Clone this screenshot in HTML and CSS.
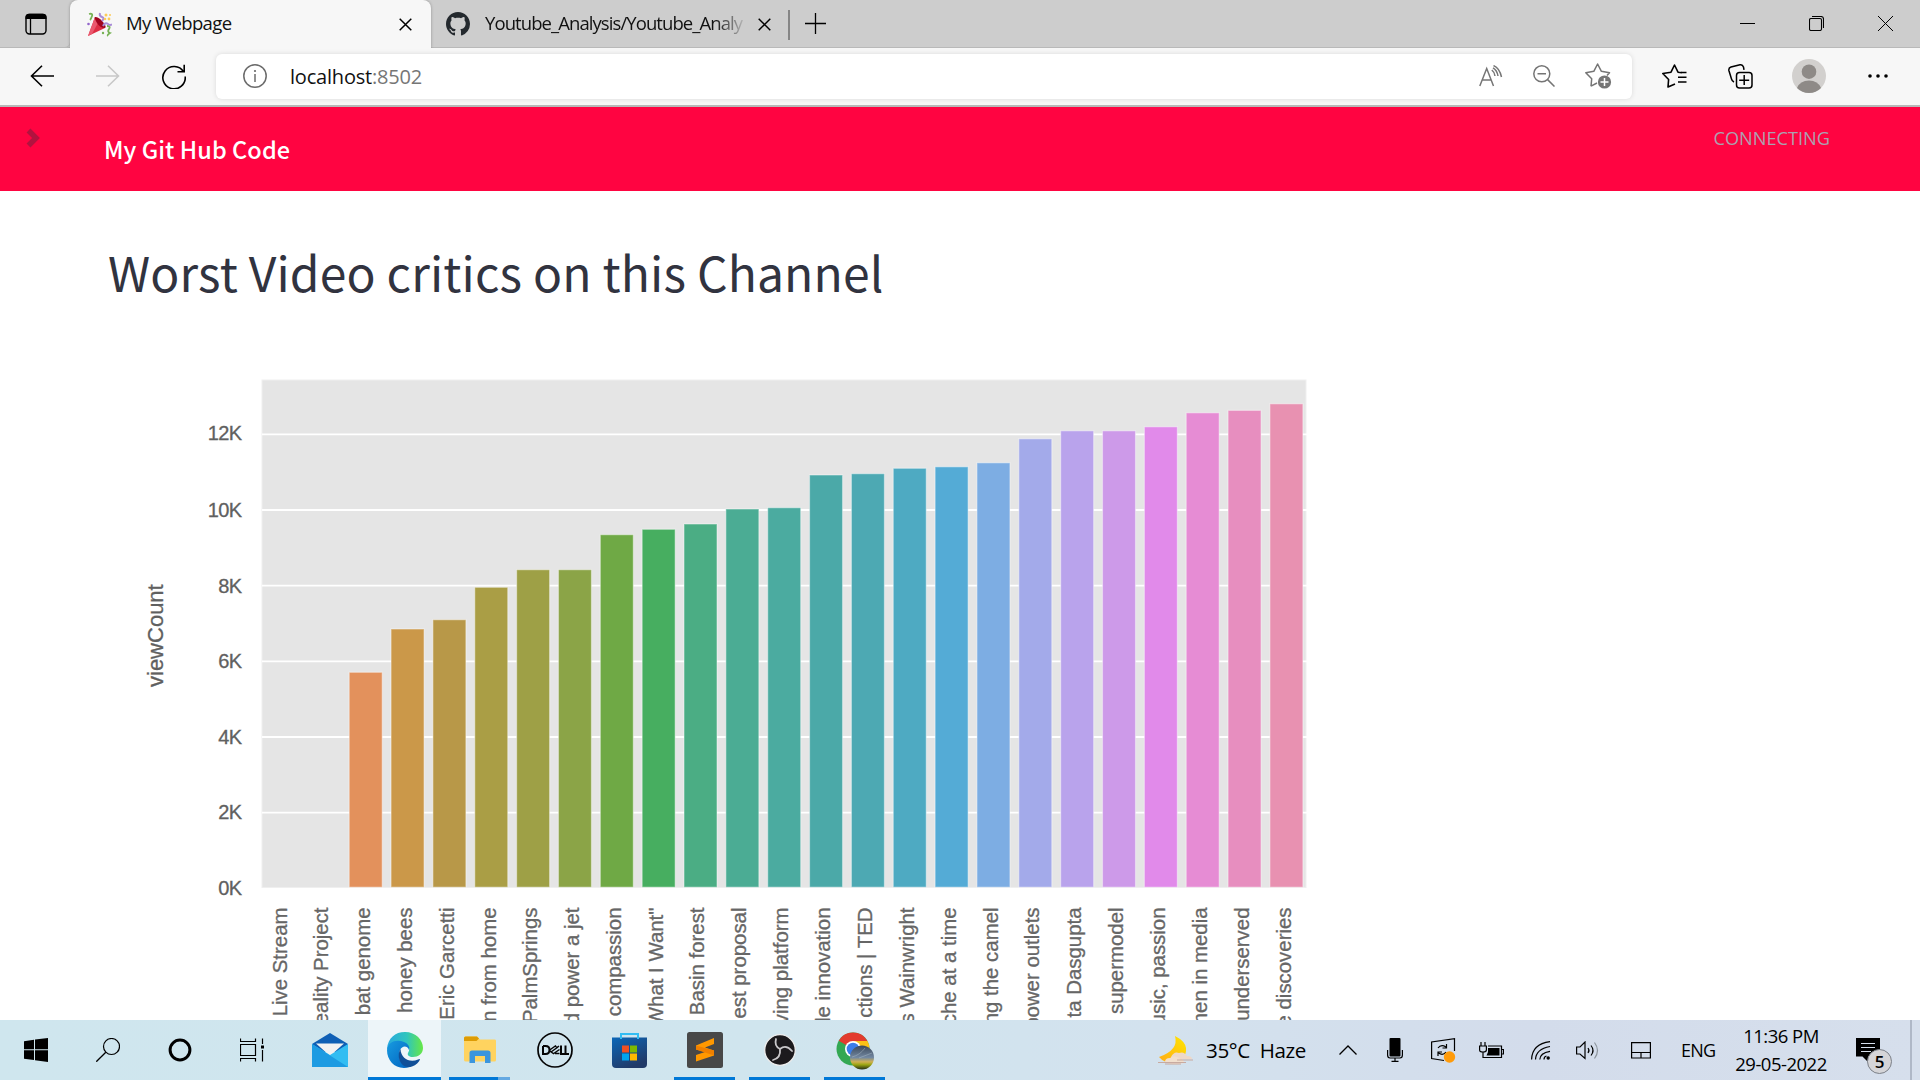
FILE: index.html
```html
<!DOCTYPE html>
<html lang="en">
<head>
<meta charset="utf-8">
<title>My Webpage</title>
<link rel="stylesheet" href="styles.css">
</head>
<body>
<div class="screen">
  <div class="tabstrip">
    <div class="tab-actions">
      <svg width="22" height="22" viewBox="0 0 22 22"><rect x="1" y="1.5" width="20" height="19.5" rx="3.5" fill="none" stroke="#000" stroke-width="1.4"/><path d="M.5 6V4Q.5.7 4 .7H18Q21.5.7 21.500 4V6Z"/><path d="M5.500 6V21" stroke="#000" stroke-width="1.300"/></svg>
    </div>
    <div class="tab tab-active">
      <svg class="favicon" width="25" height="25" viewBox="0 0 25 25"><path d="M8 5 18 16 1 24Z" fill="#dd2e44"/><path d="M8 5 12 9 5 22 1 24Z" fill="#ea596e"/><path d="M8 5Q12 5 16 10T18 16Q13 16 10 11T8 5" fill="#a0041e"/><path d="M2 2Q6 1 5 4T3 8M20 14Q24 14 22 17T23 21Q20 23 21 24" fill="none" stroke="#77b255" stroke-width="1.800"/><path d="M13 1Q12 4 15 5T15 9M16 14Q18 10 21 12T25 12" fill="none" stroke="#aa8dd8" stroke-width="2"/><g fill="#fdcb58"><circle cx="19" cy="3" r="1.500"/><circle cx="22" cy="7" r="1.400"/><circle cx="18" cy="7" r="1.300"/><circle cx="23" cy="3" r="1"/></g><circle cx="1.500" cy="12" r="1.300" fill="#9266cc"/><circle cx="16" cy="21" r="1.200" fill="#77b255"/></svg>
      <span class="tab-title title-one">My Webpage</span>
      <svg class="tab-close" width="13" height="13" viewBox="0 0 13 13"><path d="M.7.7 12.300 12.300M12.300.7.7 12.300" stroke="#000" stroke-width="1.500"/></svg>
    </div>
    <div class="tab tab-idle">
      <svg class="favicon" width="24" height="24" viewBox="0 0 16 16"><path fill="#24292e" fill-rule="evenodd" d="M8 0C3.580 0 0 3.580 0 8c0 3.540 2.290 6.530 5.470 7.590.4.070.55-.17.55-.38 0-.19-.01-.82-.01-1.490-2.010.37-2.530-.49-2.690-.94-.09-.23-.48-.94-.82-1.130-.28-.15-.68-.52-.01-.53.63-.01 1.080.58 1.230.82.72 1.210 1.870.87 2.330.66.070-.52.28-.87.51-1.070-1.780-.2-3.640-.89-3.640-3.950 0-.87.31-1.590.82-2.150-.08-.2-.36-1.020.080-2.120 0 0 .67-.21 2.200.82.64-.18 1.320-.27 2-.27.68 0 1.360.090 2 .27 1.530-1.040 2.200-.82 2.200-.82.44 1.100.16 1.920.080 2.120.51.56.82 1.270.82 2.150 0 3.070-1.870 3.750-3.650 3.950.29.25.54.73.54 1.480 0 1.070-.01 1.930-.01 2.200 0 .21.15.46.55.38A8.010 8.010 0 0 0 16 8c0-4.420-3.580-8-8-8z"/></svg>
      <span class="tab-title title-two">Youtube_Analysis/Youtube_Analy</span>
      <svg class="tab-close" width="13" height="13" viewBox="0 0 13 13"><path d="M.7.7 12.300 12.300M12.300.7.7 12.300" stroke="#000" stroke-width="1.500"/></svg>
    </div>
    <div class="tab-rule"></div>
    <svg class="new-tab" width="21" height="21" viewBox="0 0 21 21"><path d="M0 10.500H21M10.500 0V21" stroke="#000" stroke-width="1.300"/></svg>
    <div class="window-controls">
      <svg width="15" height="15" viewBox="0 0 15 15"><path d="M0 7.500H15" stroke="#000"/></svg>
      <svg width="15" height="15" viewBox="0 0 15 15"><path d="M2 2.500H11Q12.500 2.500 12.500 4V13Q12.500 14.500 11 14.500H2Q.5 14.500.5 13V4Q.5 2.500 2 2.500ZM3 .5H12Q14.500.5 14.500 3V12" fill="none" stroke="#000" stroke-width="1.100"/></svg>
      <svg width="15" height="15" viewBox="0 0 15 15"><path d="M0 0 15 15M15 0 0 15" stroke="#000"/></svg>
    </div>
  </div>

  <div class="toolbar">
    <svg width="24" height="22" viewBox="0 0 24 22"><path d="M12 .8 1.500 11 12 21.200M1.500 11H24" fill="none" stroke="#000" stroke-width="1.600"/></svg>
    <svg width="24" height="22" viewBox="0 0 24 22"><path d="M12 .8 22.500 11 12 21.200M22.500 11H0" fill="none" stroke="#c8c8c8" stroke-width="1.600"/></svg>
    <svg width="24" height="25" viewBox="0 0 24 25"><path d="M21.600 7.800A11.200 11.200 0 1 0 23.200 12.500M22.200.8V7.800H15.500" fill="none" stroke="#000" stroke-width="1.600"/></svg>
    <div class="address">
      <svg width="24" height="24" viewBox="0 0 24 24"><circle cx="12" cy="12" r="11.200" fill="none" stroke="#6b6b6b" stroke-width="1.500"/><path d="M12 10V18" stroke="#6b6b6b" stroke-width="1.500"/><circle cx="12" cy="7" r="1.100" fill="#6b6b6b"/></svg>
      <span class="url">localhost<span class="port">:8502</span></span>
      <svg width="24" height="22" viewBox="0 0 24 22"><g fill="none" stroke="#757575" stroke-width="1.500"><path d="M.8 21 7.700 3.500 14.500 21M3.200 15H12.200M12.800 5Q15.500 7 16 11M14 2.800Q18 5 19 11M14.500 .6Q20.500 3 22.500 12"/></g></svg>
      <svg width="22" height="22" viewBox="0 0 22 22"><g fill="none" stroke="#757575" stroke-width="1.500"><circle cx="8.800" cy="8.800" r="8"/><path d="M14.600 14.600 21.500 21.500M4.500 8.800H13"/></g></svg>
      <svg width="27" height="26" viewBox="0 0 27 26"><path d="M6 23.200 6.700 15.700.8 9.700 8.800 8.300 12.600 1 16.400 8.300 24.500 9.700 22 12.500M6 23.200 12 20" fill="none" stroke="#757575" stroke-width="1.500" stroke-linejoin="round"/><circle cx="19.500" cy="19" r="6.600" fill="#757575"/><path d="M15.500 19H23.500M19.500 15V23" stroke="#fff" stroke-width="1.500"/></svg>
    </div>
    <svg width="25" height="24" viewBox="0 0 25 24"><path d="M13 20 6 23 6.600 15.500.8 9.500 9 8.200 12.500 1 16 8.200 20 8.800M16 13.200H24.500M16 18H24.500M19 8.500H24.500" fill="none" stroke="#000" stroke-width="1.600" stroke-linejoin="round"/></svg>
    <svg width="25" height="25" viewBox="0 0 25 25"><g fill="none" stroke="#000" stroke-width="1.500"><rect x="8.500" y="8.500" width="15.500" height="15.500" rx="3"/><path d="M16.200 11V21M11.200 16.200H21.200M6 18Q4 17 3.500 15L.9 6.500Q.4 4 3 3L12 .8Q14.500.4 15.500 3L16 5.800"/></g></svg>
    <svg width="34" height="34" viewBox="0 0 34 34"><circle cx="17" cy="17" r="17" fill="#d2d0ce"/><circle cx="17" cy="12.700" r="7.300" fill="#8e8a87"/><path d="M5 29Q8 21.500 17 21.500T29 29Q24 34 17 34T5 29" fill="#8e8a87"/></svg>
    <svg width="20" height="4" viewBox="0 0 20 4"><circle cx="2" cy="2" r="1.800"/><circle cx="10" cy="2" r="1.800"/><circle cx="18" cy="2" r="1.800"/></svg>
  </div>

  <header class="navbar">
    <svg class="chevron" width="14" height="20" viewBox="0 0 14 20"><path d="M2.500 2.500 10 10 2.500 17.500" fill="none" stroke="#b1133f" stroke-width="5.500"/></svg>
    <span class="brand">My Git Hub Code</span>
    <span class="status">CONNECTING</span>
  </header>

  <main class="content">
    <h1 class="heading">Worst Video critics on this Channel</h1>
    <svg class="chart" width="1220" height="670" viewBox="130 350 1220 670">
      <rect class="plot" x="262" y="380" width="1044" height="507.500"/>
      <path class="grid" d="M262 434.300H1307M262 510H1307M262 585.700H1307M262 661.400H1307M262 737H1307M262 812.600H1307"/>
      <g class="ticks">
        <text x="241.500" y="440">12K</text><text x="241.500" y="517">10K</text><text x="241.500" y="592.500">8K</text><text x="241.500" y="668">6K</text><text x="241.500" y="743.500">4K</text><text x="241.500" y="819">2K</text><text x="241.500" y="895">0K</text>
      </g>
      <text class="axis-title" transform="translate(163 687) rotate(-90)">viewCount</text>
      <g class="bars">
        <rect x="349.200" y="672.300" width="33" height="214.900" fill="#e3915c"/>
        <rect x="391.050" y="629" width="33" height="258.200" fill="#cb9849"/>
        <rect x="432.900" y="619.700" width="33" height="267.500" fill="#b89848"/>
        <rect x="474.750" y="587.300" width="33" height="299.900" fill="#aa9e45"/>
        <rect x="516.600" y="569.700" width="33" height="317.500" fill="#9ea046"/>
        <rect x="558.450" y="569.700" width="33" height="317.500" fill="#8ba447"/>
        <rect x="600.300" y="534.700" width="33" height="352.500" fill="#6fa945"/>
        <rect x="642.150" y="529.300" width="33" height="357.900" fill="#47ae60"/>
        <rect x="684" y="524" width="33" height="363.200" fill="#4bad84"/>
        <rect x="725.850" y="509" width="33" height="378.200" fill="#4bac94"/>
        <rect x="767.700" y="507.700" width="33" height="379.500" fill="#4baba0"/>
        <rect x="809.550" y="475" width="33" height="412.200" fill="#4ba9a8"/>
        <rect x="851.400" y="473.700" width="33" height="413.500" fill="#4da9b3"/>
        <rect x="893.250" y="468.300" width="33" height="418.900" fill="#4eaac2"/>
        <rect x="935.100" y="466.800" width="33" height="420.400" fill="#54abd6"/>
        <rect x="976.950" y="462.800" width="33" height="424.400" fill="#7dade3"/>
        <rect x="1018.800" y="438.800" width="33" height="448.400" fill="#a3aaea"/>
        <rect x="1060.650" y="430.800" width="33" height="456.400" fill="#b9a3ec"/>
        <rect x="1102.500" y="430.800" width="33" height="456.400" fill="#cd9ae9"/>
        <rect x="1144.350" y="426.800" width="33" height="460.400" fill="#e18aea"/>
        <rect x="1186.200" y="412.800" width="33" height="474.400" fill="#e68cd4"/>
        <rect x="1228.050" y="410.400" width="33" height="476.800" fill="#e78ebf"/>
        <rect x="1269.900" y="403.800" width="33" height="483.400" fill="#e891b1"/>
      </g>
      <g class="labels">
        <text transform="translate(286.500 907.500) rotate(-90)">Live Stream</text>
        <text transform="translate(328 907.500) rotate(-90)">eality Project</text>
        <text transform="translate(370 907.500) rotate(-90)">bat genome</text>
        <text transform="translate(411.900 907.500) rotate(-90)">honey bees</text>
        <text transform="translate(453.700 907.500) rotate(-90)">Eric Garcetti</text>
        <text transform="translate(495.600 907.500) rotate(-90)">n from home</text>
        <text transform="translate(537.400 907.500) rotate(-90)">PalmSprings</text>
        <text transform="translate(579.300 907.500) rotate(-90)">d power a jet</text>
        <text transform="translate(621.100 907.500) rotate(-90)">compassion</text>
        <text transform="translate(662.500 907.500) rotate(-90)">What I Want"</text>
        <text transform="translate(704.300 907.500) rotate(-90)">Basin forest</text>
        <text transform="translate(746 907.500) rotate(-90)">est proposal</text>
        <text transform="translate(788.200 907.500) rotate(-90)">ving platform</text>
        <text transform="translate(830.200 907.500) rotate(-90)">le innovation</text>
        <text transform="translate(872 907.500) rotate(-90)">ctions | TED</text>
        <text transform="translate(913.900 907.500) rotate(-90)">s Wainwright</text>
        <text transform="translate(955.700 907.500) rotate(-90)">che at a time</text>
        <text transform="translate(997.500 907.500) rotate(-90)">ng the camel</text>
        <text transform="translate(1039.300 907.500) rotate(-90)">power outlets</text>
        <text transform="translate(1081.200 907.500) rotate(-90)">ta Dasgupta</text>
        <text transform="translate(1123 907.500) rotate(-90)">supermodel</text>
        <text transform="translate(1165 907.500) rotate(-90)">usic, passion</text>
        <text transform="translate(1206.800 907.500) rotate(-90)">men in media</text>
        <text transform="translate(1248.600 907.500) rotate(-90)">underserved</text>
        <text transform="translate(1290.500 907.500) rotate(-90)">e discoveries</text>
      </g>
    </svg>
  </main>

  <footer class="taskbar">
    <div class="system">
      <svg width="24" height="24" viewBox="0 0 24 24"><path d="M0 3.200 10 1.800V11.300H0ZM11 1.600 24 0V11.300H11ZM0 12.300H10V22L0 20.700ZM11 12.300H24V24L11 22.200Z"/></svg>
      <svg width="24" height="24" viewBox="0 0 24 24"><circle cx="15.500" cy="8.500" r="8" fill="none" stroke="#000" stroke-width="1.200"/><path d="M9.800 14.200.3 23.700" stroke="#000" stroke-width="1.300"/></svg>
      <svg width="24" height="24" viewBox="0 0 24 24"><circle cx="12" cy="12" r="9.900" fill="none" stroke="#000" stroke-width="3"/></svg>
      <svg width="24" height="24" viewBox="0 0 24 24"><g fill="none" stroke="#000" stroke-width="1.200"><path d="M.5.500V3.500H15.500V.5M.5 23.500V20.500H15.500V23.500M.5 6.500H15.500V17.500H.5ZM22.500.5V6M22.500 12V23.500"/></g><path d="M21 7.500H24V10.500H21Z"/></svg>
    </div>
    <div class="apps">
      <div class="app"><svg width="36" height="36" viewBox="0 0 36 36"><path d="M0 12 18 1 36 12 31 20H5Z" fill="#0f5fb5"/><path d="M4 11.500H32L18 24Z" fill="#f2f2f2"/><path d="M0 12 18 23 36 12V35H0Z" fill="#33bdf2"/><path d="M0 12 36 35H0Z" fill="#1d9be2"/></svg></div>
      <div class="app app-current"><svg width="36" height="36" viewBox="0 0 36 36"><defs><linearGradient id="eg" x1="0" x2="1"><stop stop-color="#28a8e0"/><stop offset=".55" stop-color="#2fc5bd"/><stop offset="1" stop-color="#67e845"/></linearGradient><linearGradient id="eb" x1="0" y1="0" x2="1" y2="1"><stop stop-color="#189be0"/><stop offset="1" stop-color="#0062c0"/></linearGradient></defs><path d="M0 17C1 6 8 0 18 0 29 0 36 8 36 16 36 22 31 25 26 25 22 25 20 23 21 21 23 18 23 14 18 12Z" fill="url(#eg)"/><path d="M0 18C1 9 10 7 17 10 22 12 23 16 22 18 20 13 15 14 13 18 9 27 17 35 23 35 10 39 0 30 0 18Z" fill="url(#eb)"/><path d="M13.500 17C8 26 16 38 25 34.500 29 33 32 30 33 27.500 33 26.500 32 27 31 27.500 23 31 14 27 13.500 17Z" fill="#114f98"/></svg></div>
      <div class="app app-open app-stack"><svg width="32" height="28" viewBox="0 0 32 28"><path d="M0 2Q0 .5 1.500.5H13L16 3.500H31Q32 3.500 32 5V24Q32 25.500 30.500 25.500H2Q0 25.500 0 24Z" fill="#ffd35f"/><path d="M0 2Q0 .5 1.500.5H13L15 2.500 12.500 5H0Z" fill="#dd9c05"/><path d="M5.500 27V17Q5.500 14.500 8 14.500H24Q26.500 14.500 26.500 17V27H21V20H11V27Z" fill="#3b95dd"/></svg></div>
      <div class="app"><svg width="36" height="36" viewBox="0 0 36 36"><circle cx="18" cy="18" r="17" fill="none" stroke="#050505" stroke-width="1.700"/><g fill="none" stroke="#050505" stroke-width="2"><path d="M6 14V22H8.500Q12.500 22 12.500 18T8.500 14H6M24 13.500V22H27.500M28.500 13.500V22H32"/><path d="M12 18.500 19 13.500M14 20 21 15M16 22 22.500 17.500M12 18.500 17 22M18 14 20 15.500 22 14M18 21.500H22.500" stroke-width="1.500"/></g></svg></div>
      <div class="app"><svg width="35" height="36" viewBox="0 0 35 36"><defs><linearGradient id="st" x1="0" y1="0" x2=".5" y2="1"><stop stop-color="#0b67b8"/><stop offset="1" stop-color="#213a68"/></linearGradient></defs><path d="M0 5.500H35V32Q35 36 31 36H4Q0 36 0 32Z" fill="url(#st)"/><path d="M9 7V2H26V7" fill="none" stroke="#32bdf3" stroke-width="2"/><path d="M10 13.500H17V20.500H10Z" fill="#f25022"/><path d="M18 13.500H25V20.500H18Z" fill="#7fba00"/><path d="M10 21.500H17V28.500H10Z" fill="#00a4ef"/><path d="M18 21.500H25V28.500H18Z" fill="#ffb900"/></svg></div>
      <div class="app app-open"><svg width="36" height="36" viewBox="0 0 36 36"><rect width="36" height="36" rx="2.500" fill="#484848"/><path d="M9 13.500 27 6V12L18 15.500 27 18.500V23.500L9 29.500V23L18 20 9 17.500Z" fill="#ff9800"/><path d="M9 13.500V17.500L27 23.500V18.500Z" fill="#f08000"/></svg></div>
      <div class="app app-open"><svg width="32" height="34" viewBox="0 0 32 34"><circle cx="16" cy="17" r="15.300" fill="#1c1a1d" stroke="#eee" stroke-width="1.300"/><g fill="none" stroke="#c9c7ca" stroke-width="1.800" stroke-linecap="round"><path d="M16 16Q10 13 12 6M16 16Q22 11 28 18M16 16Q17 25 9 27"/></g></svg></div>
      <div class="app app-open"><svg width="40" height="40" viewBox="0 0 40 40"><circle cx="18" cy="19" r="16.500" fill="#34a853"/><path d="M18 19 3.700 10.700A16.500 16.500 0 0 1 32.300 10.700Z" fill="#e33b2e"/><path d="M18 11H32.500A16.500 16.500 0 0 1 18 35.500L26 21Z" fill="#fbc116"/><circle cx="18" cy="19" r="8" fill="#fff"/><circle cx="18" cy="19" r="6.300" fill="#3b7de9"/><defs><linearGradient id="sky" x2="0" y2="1"><stop stop-color="#3a4759"/><stop offset=".5" stop-color="#7288a1"/><stop offset=".68" stop-color="#d0b052"/><stop offset=".8" stop-color="#9aa511"/><stop offset="1" stop-color="#232b18"/></linearGradient></defs><circle cx="27" cy="27.500" r="12" fill="url(#sky)"/><path d="M17 27Q25 25 30 18M24 28 37 23" stroke="#aabac5" opacity=".5" fill="none"/></svg></div>
    </div>
    <div class="tray">
      <svg width="35" height="29" viewBox="0 0 35 29"><defs><linearGradient id="mn" x1="1" x2="0" y2="1"><stop stop-color="#ffe600"/><stop offset="1" stop-color="#ffab19"/></linearGradient></defs><path d="M17 0Q21 14 1 21 6 27 15 27 29 24 28 12 27 5 17 0Z" fill="url(#mn)"/><path d="M13 21Q16 15 21 17 26 15 29 20 34 20 34 23H13Z" fill="#eed8c8"/><path d="M7 26Q7 22 12 22 17 18 22 23 26 23 26 27Q14 30 7 26Z" fill="#f1dfcd"/><path d="M19 24H35M0 26.500H28M7 28H23" stroke="#c8aaa0" stroke-width="1.200"/></svg>
      <span class="weather">35°C&nbsp; Haze</span>
      <svg width="18" height="10" viewBox="0 0 18 10"><path d="M.5 9.500 9 1 17.500 9.500" fill="none" stroke="#000" stroke-width="1.300"/></svg>
      <svg width="16" height="24" viewBox="0 0 16 24"><rect x="2.500" y="0" width="11" height="18.500" rx="1"/><path d="M.6 12V17Q.6 20 3 20H13Q15.400 20 15.400 17V12M8 20V23.400M4.500 23.400H11.500" fill="none" stroke="#000" stroke-width="1.200"/></svg>
      <svg width="25" height="25" viewBox="0 0 25 25"><path d="M13 22.500.6 20.500V4L23.500.7V13" fill="none" stroke="#000" stroke-width="1.200"/><path d="M7 10Q10 6 15 9M15.500 6V10H11.500M15 14Q12 18 7.500 15M7 18V14H11" fill="none" stroke="#000" stroke-width="1.200"/><circle cx="18.500" cy="19" r="5.700" fill="#ff9b0b"/></svg>
      <svg width="25" height="17" viewBox="0 0 25 17"><path d="M7 15.500H22.500V4H9M22.500 7.500H24.500V12H22.500" fill="none" stroke="#000" stroke-width="1.200"/><path d="M9 6H20.500V13.500H7.500L9 10Z"/><path d="M2 0V4M6 0V4M.6 4H7.400V8Q7.400 10 4 10T.6 8ZM4 10V15.500H7" fill="none" stroke="#000" stroke-width="1.200"/></svg>
      <svg width="20" height="19" viewBox="0 0 20 19"><g fill="none" stroke="#000" stroke-width="1.200"><path d="M.6 18.500Q1 3 19 .6M4.500 18.500Q5 8 19 5.500M8.800 18.500Q9 12 19 10.300M13 18.500Q13 15.500 15.500 15"/></g><circle cx="17.200" cy="17" r="1.700"/></svg>
      <svg width="23" height="19" viewBox="0 0 23 19"><path d="M.6 6V13H4L9 17.500V1L4 6Z" fill="none" stroke="#000" stroke-width="1.200"/><path d="M12 7Q14 9.500 12 12M15 4.500Q19 9.500 15 14.500" fill="none" stroke="#000" stroke-width="1.200"/><path d="M18.500 1.500Q24.500 9.500 18.500 17.500" fill="none" stroke="#8c949c" stroke-width="1.200"/></svg>
      <svg width="20" height="17" viewBox="0 0 20 17"><path d="M.6.6H19.400V16H.6ZM.6 10.500H19.400M10 10.500V16" fill="none" stroke="#000" stroke-width="1.200"/></svg>
      <span class="language">ENG</span>
      <div class="clock"><span class="time">11:36 PM</span><span class="date">29-05-2022</span></div>
      <div class="alerts">
        <svg width="24" height="24" viewBox="0 0 24 24"><path d="M0 0H24V18.500H12V24L6.500 18.500H0Z"/><path d="M5 5.500H19M5 9.500H19M5 13.500H15" stroke="#d5dfec" stroke-width="1.200"/></svg>
        <span class="badge">5</span>
      </div>
    </div>
  </footer>
</div>
</body>
</html>
```
FILE: styles.css
```css
* { box-sizing: border-box; }
body { margin: 0; font-family: "Open Sans", "Noto Sans", sans-serif; background: #fff; }
svg { display: block; flex: none; }
.screen { width: 1920px; height: 1080px; display: flex; flex-direction: column; overflow: hidden; }

.tabstrip { height: 48px; flex: none; display: flex; background: #cdcdcd; box-shadow: inset 0 -1px #b9b9b9; }
.tab-actions { width: 70px; padding: 13px 0 0 25px; box-shadow: inset 0 -1px #b9b9b9; border-radius: 0 0 5px 0; }
.tab { display: flex; align-items: flex-start; height: 48px; }
.tab-active { width: 361px; padding-left: 17px; background: #f7f7f7; border-radius: 8px 8px 0 0; box-shadow: 0 0 3px rgba(0, 0, 0, .3); clip-path: inset(0 -4px); }
.tab-idle { width: 357px; padding-left: 15px; }
.favicon { margin-top: 12px; }
.tab-title { height: 48px; line-height: 46px; font-size: 18.5px; color: #111; white-space: nowrap; overflow: hidden; }
.title-one { width: 273px; margin-left: 14px; letter-spacing: -.6px; }
.title-two { width: 262px; margin: 0 11px 0 15px; letter-spacing: -.92px; mask-image: linear-gradient(90deg, #000 88%, transparent 100%); }
.tab-close { margin-top: 18px; }
.tab-rule { width: 2px; height: 30px; margin-top: 10px; background: #858585; }
.new-tab { margin: 13px 0 0 15px; }
.window-controls { display: flex; gap: 54px; margin: 16px 27px 0 auto; }

.toolbar { height: 59px; flex: none; display: grid; grid-template-columns: 66px 66px 54px 1446px 66px 64px 76px 20px; align-items: center; padding: 0 0 1px 30px; background: #f7f7f7; border-bottom: 2px solid #b8b8b8; }
.address { width: 1416px; height: 45px; display: grid; grid-template-columns: 47px 1189px 54px 52px 27px; align-items: center; padding-left: 27px; background: #fff; border-radius: 6px; box-shadow: 0 0 5px rgba(0, 0, 0, .12); }
.url { font-size: 20px; letter-spacing: -.2px; color: #111; }
.port { color: #767676; }

.navbar { height: 84px; flex: none; display: flex; align-items: flex-start; background: #ff0441; }
.chevron { margin: 21px 0 0 26px; }
.brand { margin-left: 64px; font: 500 23.500px/84px "Noto Sans CJK SC", sans-serif; letter-spacing: .06px; color: #fff; }
.status { margin: 18px 90px 0 auto; font-size: 18.200px; line-height: 27px; color: #ada0b0; }

.content { flex: 1; min-height: 0; overflow: hidden; background: #fff; }
.heading { height: 159px; margin: 0 0 0 108px; font: 400 48px/161px "Noto Sans CJK SC", sans-serif; letter-spacing: .14px; color: #31333f; white-space: nowrap; }
.chart { margin-left: 130px; font-family: "Liberation Sans", Arial, sans-serif; }
.plot { fill: #e5e5e5; stroke: #efefef; }
.grid { stroke: #fff; stroke-width: 1.800; }
.ticks { font-size: 20px; letter-spacing: -.6px; fill: #606060; stroke: #606060; stroke-width: .3; text-anchor: end; }
.axis-title { font-size: 22px; fill: #606060; stroke: #606060; stroke-width: .3; }
.bars { stroke: #fff; stroke-opacity: .4; stroke-width: 1.200; }
.labels { font-size: 20.400px; fill: #666; stroke: #666; stroke-width: .3; text-anchor: end; }

.taskbar { height: 60px; flex: none; display: flex; background: linear-gradient(90deg, #cfe6ee 0, #d0e5ee 40%, #d3e2ee 60%, #d3dceb 80%, #d6dfec 100%); }
.system { width: 291px; display: grid; grid-template-columns: repeat(4, 72px); align-items: center; padding-left: 24px; }
.apps { display: flex; margin-left: 1px; }
.app { width: 75px; height: 60px; display: flex; align-items: center; justify-content: center; }
.app-current { background: linear-gradient(#0078d7, #0078d7) center bottom / 100% 3px no-repeat #edf5f9; background-clip: content-box; padding: 0 1px; }
.app-open { background: linear-gradient(#0078d7, #0078d7) center bottom / 61px 3px no-repeat; }
.app-stack { background: linear-gradient(90deg, #0078d7 49px, #64a9e2 49px) center bottom / 61px 3px no-repeat; }
.tray { margin-left: 266px; display: grid; grid-template-columns: 48px 133px 48px 44px 48px 52px 45px 55px 50px 51px 124px 56px 7px; align-items: center; }
.weather { font-size: 20.600px; letter-spacing: -.4px; white-space: nowrap; }
.language { font-size: 18px; letter-spacing: -.8px; }
.clock { width: 98px; display: flex; flex-direction: column; align-items: center; font-size: 18.500px; line-height: 28px; letter-spacing: -.5px; }
.alerts { position: relative; width: 56px; height: 60px; padding-top: 18px; border-right: 2px solid #afb8c7; }
.badge { position: absolute; left: 11px; top: 29px; width: 25px; height: 25px; border: 1px solid #7b8088; border-radius: 50%; background: #d5d5d8; font-size: 17px; font-weight: 600; line-height: 23px; text-align: center; }
```
